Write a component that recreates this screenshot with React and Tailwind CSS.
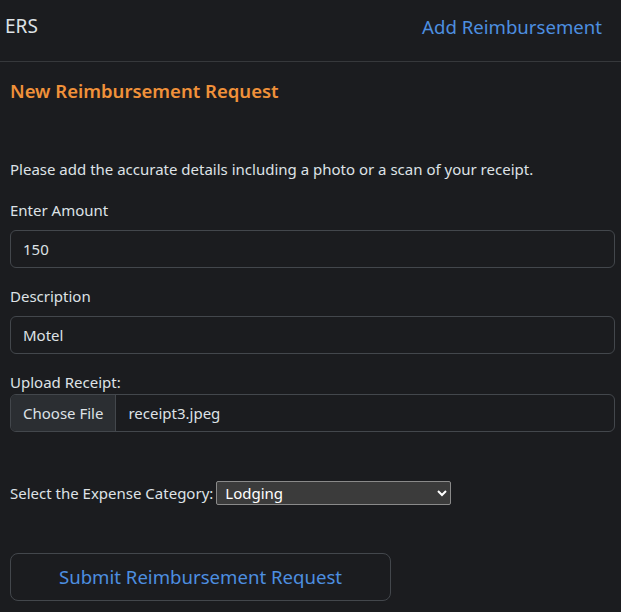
import { useState } from "react";

function Field({ label, value, onChange }) {
  return (
    <div className="flex flex-col">
      <label className="mb-[8px] leading-[24px]">{label}</label>
      <input
        type="text"
        value={value}
        onChange={(e) => onChange(e.target.value)}
        className="h-[38px] w-full rounded-[6px] border border-[#43474c] bg-[#1b1c1f] px-[12px] text-[#dee2e6] focus:outline-none"
      />
    </div>
  );
}

export default function App() {
  const [amount, setAmount] = useState("150");
  const [description, setDescription] = useState("Motel");
  const [category, setCategory] = useState("Lodging");

  return (
    <div className="min-h-[612px] bg-[#1b1c1f] text-[15px] text-[#dee2e6] font-['Noto_Sans',sans-serif]">
      <header className="flex h-[62px] items-center justify-between border-b border-[#36383b] pb-[8px] pl-[5px] pr-[19px]">
        <span className="text-[19px]">ERS</span>
        <a href="#" className="text-[18.6px] text-[#4d8fe0]">
          Add Reimbursement
        </a>
      </header>

      <main className="pl-[10px] pr-[6px]">
        <h2 className="mt-[15px] text-[18.5px] font-semibold text-[#f0913a]">New Reimbursement Request</h2>

        <p className="mt-[52px] leading-[24px]">
          Please add the accurate details including a photo or a scan of your receipt.
        </p>

        <div className="mt-[17px] flex flex-col gap-[16px]">
          <Field label="Enter Amount" value={amount} onChange={setAmount} />
          <Field label="Description" value={description} onChange={setDescription} />
        </div>

        <div className="mt-[16px] flex flex-col">
          <label className="leading-[24px]">Upload Receipt:</label>
          <div className="flex h-[38px] w-full overflow-hidden rounded-[6px] border border-[#43474c]">
            <span className="flex items-center border-r border-[#43474c] bg-[#2b2e32] px-[12px]">Choose File</span>
            <span className="flex items-center px-[12px]">receipt3.jpeg</span>
          </div>
        </div>

        <div className="mt-[49px] flex items-center">
          <label className="mr-[3px]">Select the Expense Category:</label>
          <select
            value={category}
            onChange={(e) => setCategory(e.target.value)}
            className="h-[24px] w-[235px] rounded-[2px] border border-[#8a8a8a] bg-[#3b3b3b] pl-[4px] text-[#ffffff] focus:outline-none"
          >
            <option>Lodging</option>
            <option>Travel</option>
            <option>Food</option>
            <option>Other</option>
          </select>
        </div>

        <button className="mt-[48px] h-[48px] w-[381px] rounded-[8px] border border-[#43474c] text-[18.6px] text-[#4d8fe0]">
          Submit Reimbursement Request
        </button>
      </main>
    </div>
  );
}
